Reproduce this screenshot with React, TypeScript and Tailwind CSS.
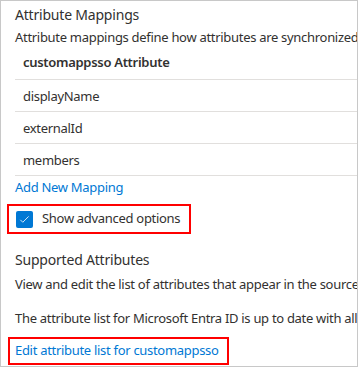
import React from "react";

const rows = ["displayName", "externalId", "members"];

export default function App() {
  return (
    <div className="w-[359px] h-[368px] bg-white font-['Noto_Sans','Liberation_Sans',sans-serif] text-[13px] tracking-[-0.3px] text-[#323130]">
      <div className="w-[358px] h-[367px] border border-[#c8c8c8] overflow-hidden pl-[14px] pt-[4px] whitespace-nowrap">
        <div className="text-[14px] leading-[20px] tracking-[-0.2px]">Attribute Mappings</div>
        <div className="leading-[20px] mt-[2px]">
          Attribute mappings define how attributes are synchronized between Microsoft Entra ID and customappsso
        </div>

        <div className="w-[400px]">
          <div className="h-[33px] flex items-center pl-[8px] font-semibold border-b border-[#e1dfdd]">
            customappsso Attribute
          </div>
          {rows.map((r) => (
            <div
              key={r}
              className="h-[32px] flex items-center pl-[8px] pt-[3px] border-b border-[#e1dfdd]"
            >
              {r}
            </div>
          ))}
        </div>

        <div className="leading-[20px] mt-[1px] text-[#0078d4]">Add New Mapping</div>

        <div className="mt-[7px] -ml-[8px] inline-flex items-center h-[30px] w-[184px] border-2 border-[#ff0000] pl-[7px]">
          <span className="w-[17px] h-[17px] rounded-[2px] bg-[#0078d4] flex items-center justify-center">
            <svg viewBox="0 0 16 16" className="w-[11px] h-[11px]" fill="none">
              <path d="M2 8.5l3.5 3.5L14 3.5" stroke="white" strokeWidth="1.2" />
            </svg>
          </span>
          <span className="ml-[9px]">Show advanced options</span>
        </div>

        <div className="text-[14px] leading-[20px] tracking-[-0.2px] mt-[16px]">Supported Attributes</div>
        <div className="leading-[20px] mt-[4px]">
          View and edit the list of attributes that appear in the source and target systems.
        </div>
        <div className="leading-[20px] mt-[14px]">
          The attribute list for Microsoft Entra ID is up to date with all supported attributes.
        </div>

        <div className="mt-[9px] -ml-[7px] inline-flex items-center h-[28px] w-[221px] border-2 border-[#ff0000] pl-[5px] text-[#0078d4]">
          Edit attribute list for customappsso
        </div>
      </div>
    </div>
  );
}
